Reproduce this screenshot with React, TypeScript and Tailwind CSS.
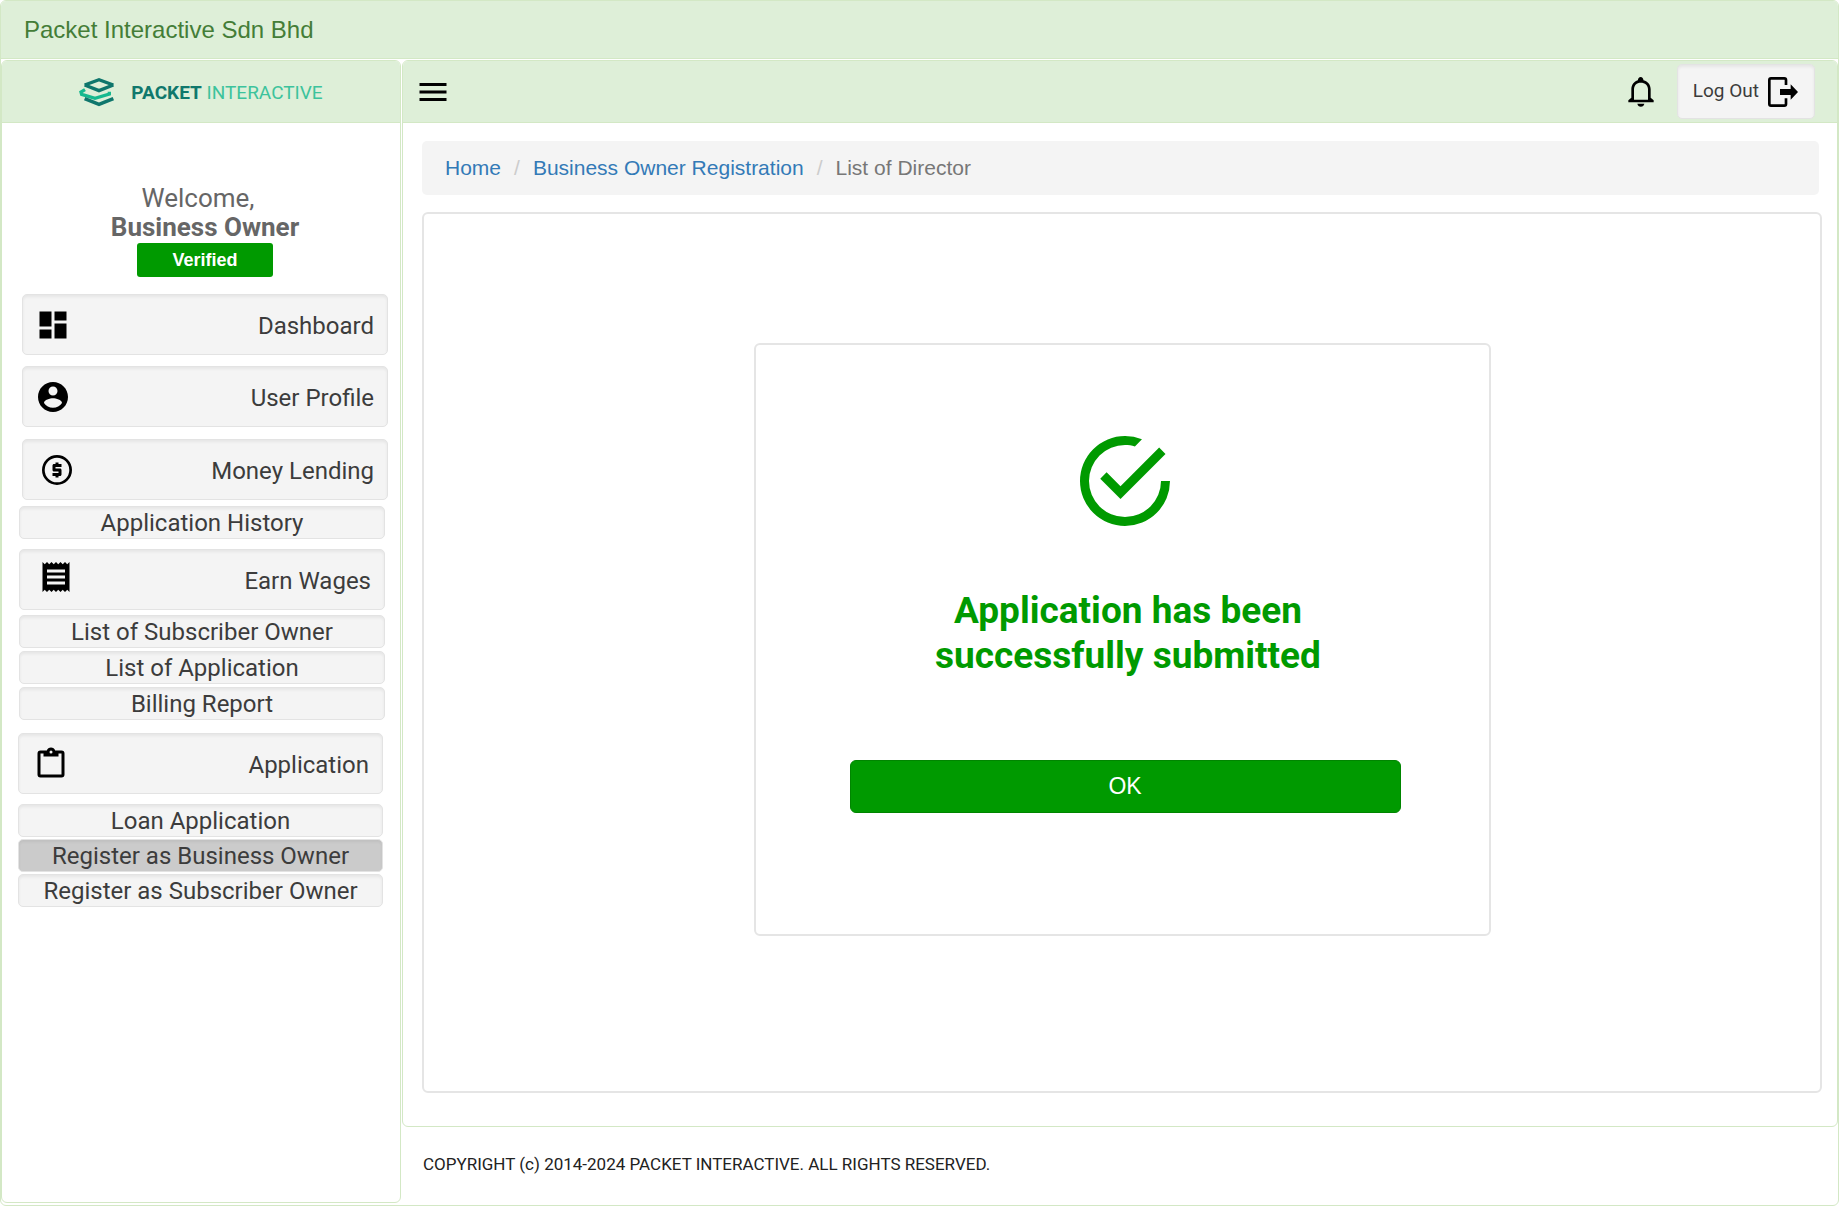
import React from "react";

const GLYPHS = {
  menu: "M3 18h18v-2H3v2zm0-5h18v-2H3v2zm0-7v2h18V6H3z",
  dashboard: "M3 13h8V3H3v10zm0 8h8v-6H3v6zm10 0h8V11h-8v10zm0-18v6h8V3h-8z",
  account: "M12 2C6.480 2 2 6.480 2 12s4.480 10 10 10 10-4.480 10-10S17.520 2 12 2zm0 3c1.660 0 3 1.340 3 3s-1.340 3-3 3-3-1.340-3-3 1.340-3 3-3zm0 14.200c-2.500 0-4.710-1.280-6-3.220.03-1.990 4-3.080 6-3.080 1.990 0 5.970 1.090 6 3.080-1.290 1.940-3.500 3.220-6 3.220z",
  money: "M12 2a10 10 0 1 0 0 20 10 10 0 0 0 0-20zm0 18.200a8.200 8.200 0 1 1 0-16.400 8.200 8.200 0 0 1 0 16.400zM11 17h2v-1h1c.55 0 1-.45 1-1v-3c0-.55-.45-1-1-1h-3v-1h4V8h-2V7h-2v1h-1c-.55 0-1 .45-1 1v3c0 .55.45 1 1 1h3v1H9v2h2v1z",
  receipt: "M18 17H6v-2h12v2zm0-4H6v-2h12v2zm0-4H6V7h12v2zM3 22l1.500-1.500L6 22l1.500-1.500L9 22l1.500-1.500L12 22l1.500-1.500L15 22l1.500-1.500L18 22l1.500-1.500L21 22V2l-1.500 1.500L18 2l-1.500 1.500L15 2l-1.500 1.500L12 2l-1.500 1.500L9 2 7.500 3.500 6 2 4.500 3.500 3 2v20z",
  clipboard: "M19 3h-4.180C14.400 1.840 13.300 1 12 1s-2.400.84-2.820 2H5a2 2 0 0 0-2 2v14a2 2 0 0 0 2 2h14a2 2 0 0 0 2-2V5a2 2 0 0 0-2-2m-7 0a1 1 0 1 1 0 2 1 1 0 0 1 0-2M7 7h10V5h2v14H5V5h2v2z",
  check: "M20 12a8 8 0 0 1-8 8 8 8 0 0 1-8-8 8 8 0 0 1 8-8c.76 0 1.500.11 2.200.31l1.570-1.570A9.822 9.822 0 0 0 12 2 10 10 0 0 0 2 12a10 10 0 0 0 10 10 10 10 0 0 0 10-10M7.910 10.080 6.500 11.500 11 16 21 6l-1.410-1.420L11 13.170l-3.090-3.090z",
};

type IconName = keyof typeof GLYPHS;

function Icon({ name, className }: { name: IconName; className: string }) {
  return (
    <svg viewBox="0 0 24 24" fill="currentColor" aria-hidden="true" className={className}>
      <path fillRule="evenodd" d={GLYPHS[name]} />
    </svg>
  );
}

function BellIcon() {
  return (
    <svg viewBox="0 0 108 108" fill="currentColor" aria-hidden="true" className="size-9 text-black">
      <path
        fillRule="evenodd"
        d="M53 9c5 0 8 4 8.500 9.500C75 22 83 32 83 46v25l9 8v6H16v-6l9-8V46c0-14 8-24 19.500-27.500C45 13 48 9 53 9zM53 26c-12 0-20 8-20 20v31h42V46c0-12-9-20-22-20z"
      />
      <path d="M43 89h21c-1 6-5 9-10.500 9S44 95 43 89z" />
    </svg>
  );
}

function LogoutIcon() {
  return (
    <svg viewBox="0 0 108 108" aria-hidden="true" className="size-9 text-black">
      <path
        d="M63 33V18c0-3-2-5-5-5H18c-3 0-5 2-5 5v72c0 3 2 5 5 5h40c3 0 5-2 5-5V73"
        fill="none"
        stroke="currentColor"
        strokeWidth="8"
      />
      <path d="M45 45h32V31l22 23-22 23V63H45z" fill="currentColor" />
    </svg>
  );
}

function Logo() {
  return (
    <a href="#" aria-label="Packet Interactive" className="flex items-center gap-4">
      <svg viewBox="0 0 108 90" className="h-[30px] w-9" fill="none" strokeWidth="10" aria-hidden="true">
        <path d="M18 38 6 45 8 52 48 64 91 51V44" stroke="#16b98f" />
        <path d="M17 65 60 82 103 65" stroke="#0f766c" strokeWidth="11" />
        <path d="M17 24 60 8 103 24" stroke="#0f766c" />
        <path d="M17 24 60 41 103 24" stroke="#0f766c" />
      </svg>
      <span className="pt-0.5 text-[19px] leading-6 whitespace-nowrap text-[#3cc39c]">
        <b className="font-bold text-[#10786c]">PACKET</b> INTERACTIVE
      </span>
    </a>
  );
}

const well =
  "rounded-[5px] border border-[#e3e3e3] bg-[#f4f4f4] text-[#3c3c3c] shadow-[inset_0_2px_3px_rgba(0,0,0,0.06)]";

function NavButton({ icon, label, iconClass }: { icon: IconName; label: string; iconClass: string }) {
  return (
    <button type="button" className={`flex h-[61px] w-full items-center justify-between pr-[13px] text-[24px] leading-7 ${well}`}>
      <Icon name={icon} className={`size-9 text-black ${iconClass}`} />
      <span className="pt-0.5">{label}</span>
    </button>
  );
}

function SubButton({ label, active = false }: { label: string; active?: boolean }) {
  return (
    <button
      type="button"
      aria-current={active ? "page" : undefined}
      className={`h-[33px] w-full text-center text-[24px] leading-7 ${well} ${active ? "bg-[#cbcbcb]!" : ""}`}
    >
      {label}
    </button>
  );
}

function Sidebar() {
  return (
    <aside className="flex w-[400px] shrink-0 flex-col rounded-[6px] border border-[#d3e8c5]">
      <div className="flex h-[62px] items-center justify-center rounded-t-[5px] border-b border-[#d3e8c5] bg-[#deefd8]">
        <Logo />
      </div>
      <div className="flex flex-col items-center pt-[61px] pl-2 text-[26px] leading-[29px] text-[#666]">
        <p className="pr-3.5">Welcome,</p>
        <p className="font-bold">Business Owner</p>
        <span className="mt-px flex h-[34px] w-[136px] items-center justify-center rounded-[3px] bg-[#009a00] font-['Liberation_Sans'] text-[18px] font-bold text-white">
          Verified
        </span>
      </div>
      <nav aria-label="Main" className="flex flex-col pt-[17px]">
        <div className="flex flex-col gap-[11px] pr-3 pl-5">
          <NavButton icon="dashboard" label="Dashboard" iconClass="ml-3" />
          <NavButton icon="account" label="User Profile" iconClass="ml-3" />
          <div className="pt-px">
            <NavButton icon="money" label="Money Lending" iconClass="ml-4" />
          </div>
        </div>
        <div className="flex flex-col gap-[3px] pt-1.5 pr-[15px] pl-[17px]">
          <SubButton label="Application History" />
          <div className="pt-[7px] pb-[2px]">
            <NavButton icon="receipt" label="Earn Wages" iconClass="mb-1.5 ml-[18px]" />
          </div>
          <SubButton label="List of Subscriber Owner" />
          <SubButton label="List of Application" />
          <SubButton label="Billing Report" />
        </div>
        <div className="flex flex-col gap-0.5 pt-[13px] pr-[17px] pl-4">
          <div className="pb-2">
            <NavButton icon="clipboard" label="Application" iconClass="ml-3.5" />
          </div>
          <SubButton label="Loan Application" />
          <SubButton label="Register as Business Owner" active />
          <SubButton label="Register as Subscriber Owner" />
        </div>
      </nav>
    </aside>
  );
}

function TopBar() {
  return (
    <div className="flex h-[62px] items-center justify-between rounded-t-[5px] border-b border-[#d3e8c5] bg-[#deefd8] pr-[22px] pl-3">
      <button type="button" aria-label="Toggle menu">
        <Icon name="menu" className="size-9 text-black" />
      </button>
      <div className="flex items-center gap-[18px]">
        <button type="button" aria-label="Notifications">
          <BellIcon />
        </button>
        <button type="button" className={`flex h-[55px] items-center gap-1.5 pr-[13px] pl-[15px] text-[19px] ${well}`}>
          Log Out
          <LogoutIcon />
        </button>
      </div>
    </div>
  );
}

function Breadcrumb() {
  return (
    <nav
      aria-label="Breadcrumb"
      className="mr-[3px] flex h-[54px] items-center gap-[13px] rounded-[5px] bg-[#f4f4f4] px-[23px] font-['Liberation_Sans'] text-[21px]"
    >
      <a href="#" className="text-[#337ab7]">Home</a>
      <span className="text-[#ccc]">/</span>
      <a href="#" className="text-[#337ab7]">Business Owner Registration</a>
      <span className="text-[#ccc]">/</span>
      <span aria-current="page" className="text-[#777]">List of Director</span>
    </nav>
  );
}

function Confirmation() {
  return (
    <section className="mt-[17px] mb-[33px] flex flex-1 justify-center rounded-[6px] border-2 border-[#e5e5e5] pt-[129px] pb-[155px]">
      <div className="flex w-[737px] flex-col items-center rounded-[6px] border-2 border-[#e5e5e5] pt-[82px] pl-1.5">
        <Icon name="check" className="size-[108px] text-[#009a00]" />
        <h1 className="mt-[53px] w-[420px] pl-1.5 text-center text-[37px] leading-[45px] font-bold text-[#009a00]">
          Application has been successfully submitted
        </h1>
        <button
          type="button"
          className="mt-[82px] h-[53px] w-[551px] rounded-[6px] border border-[#008500] bg-[#009a00] font-['Liberation_Sans'] text-[23px] text-white"
        >
          OK
        </button>
      </div>
    </section>
  );
}

export default function App() {
  return (
    <div className="flex min-h-screen flex-col rounded-[6px] border border-[#d3e8c5] bg-white font-['Roboto',sans-serif]">
      <header className="flex h-[58px] items-center rounded-t-[5px] border-b border-[#d3e8c5] bg-[#deefd8] pl-[23px] font-['Liberation_Sans'] text-[24px] text-[#447d37]">
        Packet Interactive Sdn Bhd
      </header>
      <div className="flex flex-1 gap-[1px] pt-px pb-[2px]">
        <Sidebar />
        <div className="flex min-w-0 flex-1 flex-col">
          <main className="flex flex-1 flex-col rounded-[6px] border border-[#d3e8c5]">
            <TopBar />
            <div className="flex flex-1 flex-col pt-[18px] pr-[15px] pl-[19px]">
              <Breadcrumb />
              <Confirmation />
            </div>
          </main>
          <footer className="flex h-[76px] items-center pl-[21px] text-[17px] text-[#222]">
            COPYRIGHT (c) 2014-2024 PACKET INTERACTIVE. ALL RIGHTS RESERVED.
          </footer>
        </div>
      </div>
    </div>
  );
}
